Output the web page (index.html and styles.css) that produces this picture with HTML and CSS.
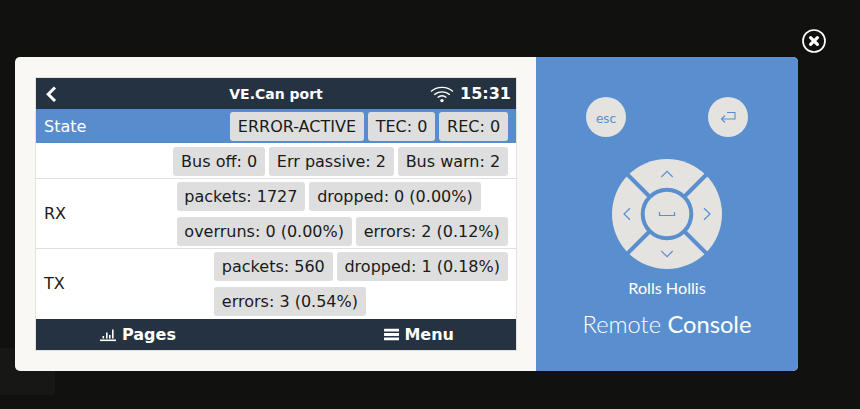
FILE: index.html
```html
<!DOCTYPE html>
<html lang="en">
<head>
<meta charset="utf-8">
<title>Remote Console</title>
<link rel="stylesheet" href="styles.css">
</head>
<body>
<div class="ghost"></div>
<button class="close" aria-label="Close">
  <svg width="26" height="26" viewBox="0 0 26 26"><circle cx="13" cy="13" r="11" fill="none" stroke="#fff" stroke-width="1.7"/><path d="M9.6 9.6l6.8 6.8M16.4 9.6l-6.800 6.800" stroke="#fff" stroke-width="3.2" stroke-linecap="round"/></svg>
</button>
<main class="modal">
  <section class="left">
    <div class="screen">
      <header class="top">
        <svg class="back" width="12" height="18" viewBox="0 0 12 18"><path d="M10 2.500L3.200 9.300 10 16" fill="none" stroke="#fff" stroke-width="3"/></svg>
        <div class="title">VE.Can port</div>
        <div class="status">
          <svg width="24" height="18" viewBox="0 0 24 18" fill="none" stroke="#fff" stroke-width="1.3"><path d="M1 6.500C7 1 17 1 23 6.500"/><path d="M4.200 9.800C8.500 5.800 15.500 5.800 19.800 9.800"/><path d="M7.600 12.600C10.400 10.300 13.600 10.300 16.400 12.600"/><circle cx="12" cy="15.600" r="1.700" fill="#fff" stroke="none"/></svg>
          <span>15:31</span>
        </div>
      </header>
      <div class="row state"><span class="label">State</span><div class="chips"><span class="chip">ERROR-ACTIVE</span><span class="chip">TEC: 0</span><span class="chip">REC: 0</span></div></div>
      <div class="row bus"><span class="label"></span><div class="chips"><span class="chip">Bus off: 0</span><span class="chip">Err passive: 2</span><span class="chip">Bus warn: 2</span></div></div>
      <div class="row"><span class="label">RX</span><div class="chips rx"><span class="chip">packets: 1727</span><span class="chip">dropped: 0 (0.00%)</span><span class="chip">overruns: 0 (0.00%)</span><span class="chip">errors: 2 (0.12%)</span></div></div>
      <div class="row last"><span class="label">TX</span><div class="chips tx"><span class="chip">packets: 560</span><span class="chip">dropped: 1 (0.18%)</span><span class="chip">errors: 3 (0.54%)</span></div></div>
      <footer class="bottom">
        <div class="tab">
          <svg width="16" height="14" viewBox="0 0 16 14" fill="#fff"><rect x="0" y="11.500" width="16" height="1.600"/><rect x="2.500" y="8" width="1.600" height="2.500"/><rect x="6" y="4.500" width="1.600" height="6"/><rect x="9" y="7" width="1.600" height="3.500"/><rect x="12" y="1.500" width="1.600" height="9"/></svg>
          <span>Pages</span>
        </div>
        <div class="tab menu">
          <svg width="15.500" height="13" viewBox="0 0 16 13" fill="#fff"><rect y="0.500" width="16" height="3" rx=".6"/><rect y="5" width="16" height="3" rx=".6"/><rect y="9.500" width="16" height="3" rx=".6"/></svg>
          <span>Menu</span>
        </div>
      </footer>
    </div>
  </section>
  <aside class="right">
    <div class="keys-top">
      <div class="round esc">esc</div>
      <div class="round">
        <svg width="16" height="13" viewBox="0 0 16 13" fill="none" stroke="#5a8fcf" stroke-width="1.100"><path d="M7 1.500H15V8H1.500M5 4.500L1.500 8 5 11.500"/></svg>
      </div>
    </div>
    <svg class="pad" width="110" height="110" viewBox="0 0 110 110">
      <circle cx="55" cy="55" r="55" fill="#e4e3df"/>
      <g stroke="#5a8fcf" stroke-width="4">
        <path d="M14 14L38 38M96 14L72 38M14 96L38 72M96 96L72 72"/>
        <circle cx="55" cy="55" r="24.300" fill="#e4e3df"/>
      </g>
      <g fill="none" stroke="#5a8fcf" stroke-width="1.200">
        <path d="M49.300 18L55 12.300 60.700 18M49.300 92L55 97.700 60.700 92M18 49.300L12 55l6 5.700M92 49.300L98 55l-6 5.700M47.500 53v3.500h15V53"/>
      </g>
    </svg>
    <div class="name">Rolls Hollis</div>
    <div class="brand">Remote <b>Console</b></div>
  </aside>
</main>
</body>
</html>
```
FILE: styles.css
```css
* { box-sizing: border-box; }
html, body { margin: 0; height: 100%; }
body {
  background: #111110;
  padding: 57px 0 0 15px;
  overflow: hidden;
  font-family: "DejaVu Sans", sans-serif;
}
.ghost {
  position: absolute;
  left: 0;
  top: 348px;
  width: 55px;
  height: 47px;
  background: #171716;
  border-radius: 0 0 3px 0;
}
.close {
  position: absolute;
  left: 800.7px;
  top: 28px;
  width: 26px;
  height: 26px;
  padding: 0;
  border: 0;
  background: none;
  display: block;
}
.close svg { display: block; }
.modal {
  position: relative;
  display: flex;
  width: 783px;
  height: 314px;
  border-radius: 5px;
  overflow: hidden;
  background: #f9f8f4;
}
.left { width: 521px; padding: 20px 0 0 20px; }
.screen {
  width: 482px;
  height: 274px;
  border: 1px solid #e2e2e0;
  background: #fff;
  display: flex;
  flex-direction: column;
}
.top {
  height: 31px;
  flex: none;
  background: #253241;
  color: #fff;
  display: flex;
  align-items: center;
  position: relative;
  padding: 0 5px 0 9px;
  justify-content: space-between;
}
.title {
  position: absolute;
  left: 0;
  right: 0;
  text-align: center;
  font-size: 14px;
  font-weight: 700;
}
.status { display: flex; align-items: center; gap: 6px; font-size: 16px; font-weight: 700; }
.status svg, .back { display: block; }
.row {
  display: flex;
  justify-content: space-between;
  align-items: center;
  flex: none;
  border-bottom: 1px solid #e0e0e0;
  padding: 0 8px;
  color: #1a1a1a;
  font-size: 16px;
}
.row.last { border-bottom: 0; }
.state { background: #578dcc; border-bottom: 0; color: #fff; height: 34px; }
.label { flex: none; }
.chips {
  display: flex;
  flex-wrap: wrap;
  justify-content: flex-end;
  gap: 6px 4px;
  padding: 3px 0 2px;
}
.bus .chips { padding-top: 4px; }
.rx { width: 331.5px; justify-content: flex-start; }
.tx { width: 294px; justify-content: flex-start; }
.chip {
  background: #dedede;
  color: #1a1a1a;
  height: 29px;
  line-height: 29px;
  padding: 0 7.85px;
  border-radius: 3px;
  white-space: nowrap;
}
.bottom {
  margin-top: auto;
  height: 31px;
  flex: none;
  background: #253241;
  color: #fff;
  display: flex;
  justify-content: space-between;
  padding: 0 62px 0 64px;
  font-size: 16px;
  font-weight: 700;
}
.tab { display: flex; align-items: center; gap: 6px; }
.menu { gap: 5px; }
.right {
  width: 262px;
  background: #5a8fcf;
  color: #fff;
  display: flex;
  flex-direction: column;
  align-items: center;
  padding-top: 40px;
  font-family: Lato, sans-serif;
}
.keys-top { width: 162px; display: flex; justify-content: space-between; }
.round {
  width: 40px;
  height: 40px;
  border-radius: 50%;
  background: #e4e3df;
  color: #5a8fcf;
  display: flex;
  align-items: center;
  justify-content: center;
}
.esc { font-size: 14px; }
.pad { display: block; margin-top: 22px; }
.name { margin-top: 9px; font-size: 16.2px; line-height: 20px; font-weight: 400; }
.brand { margin-top: 12px; font-size: 23.7px; line-height: 28px; font-weight: 300; }
.brand b { font-weight: 400; }
```
